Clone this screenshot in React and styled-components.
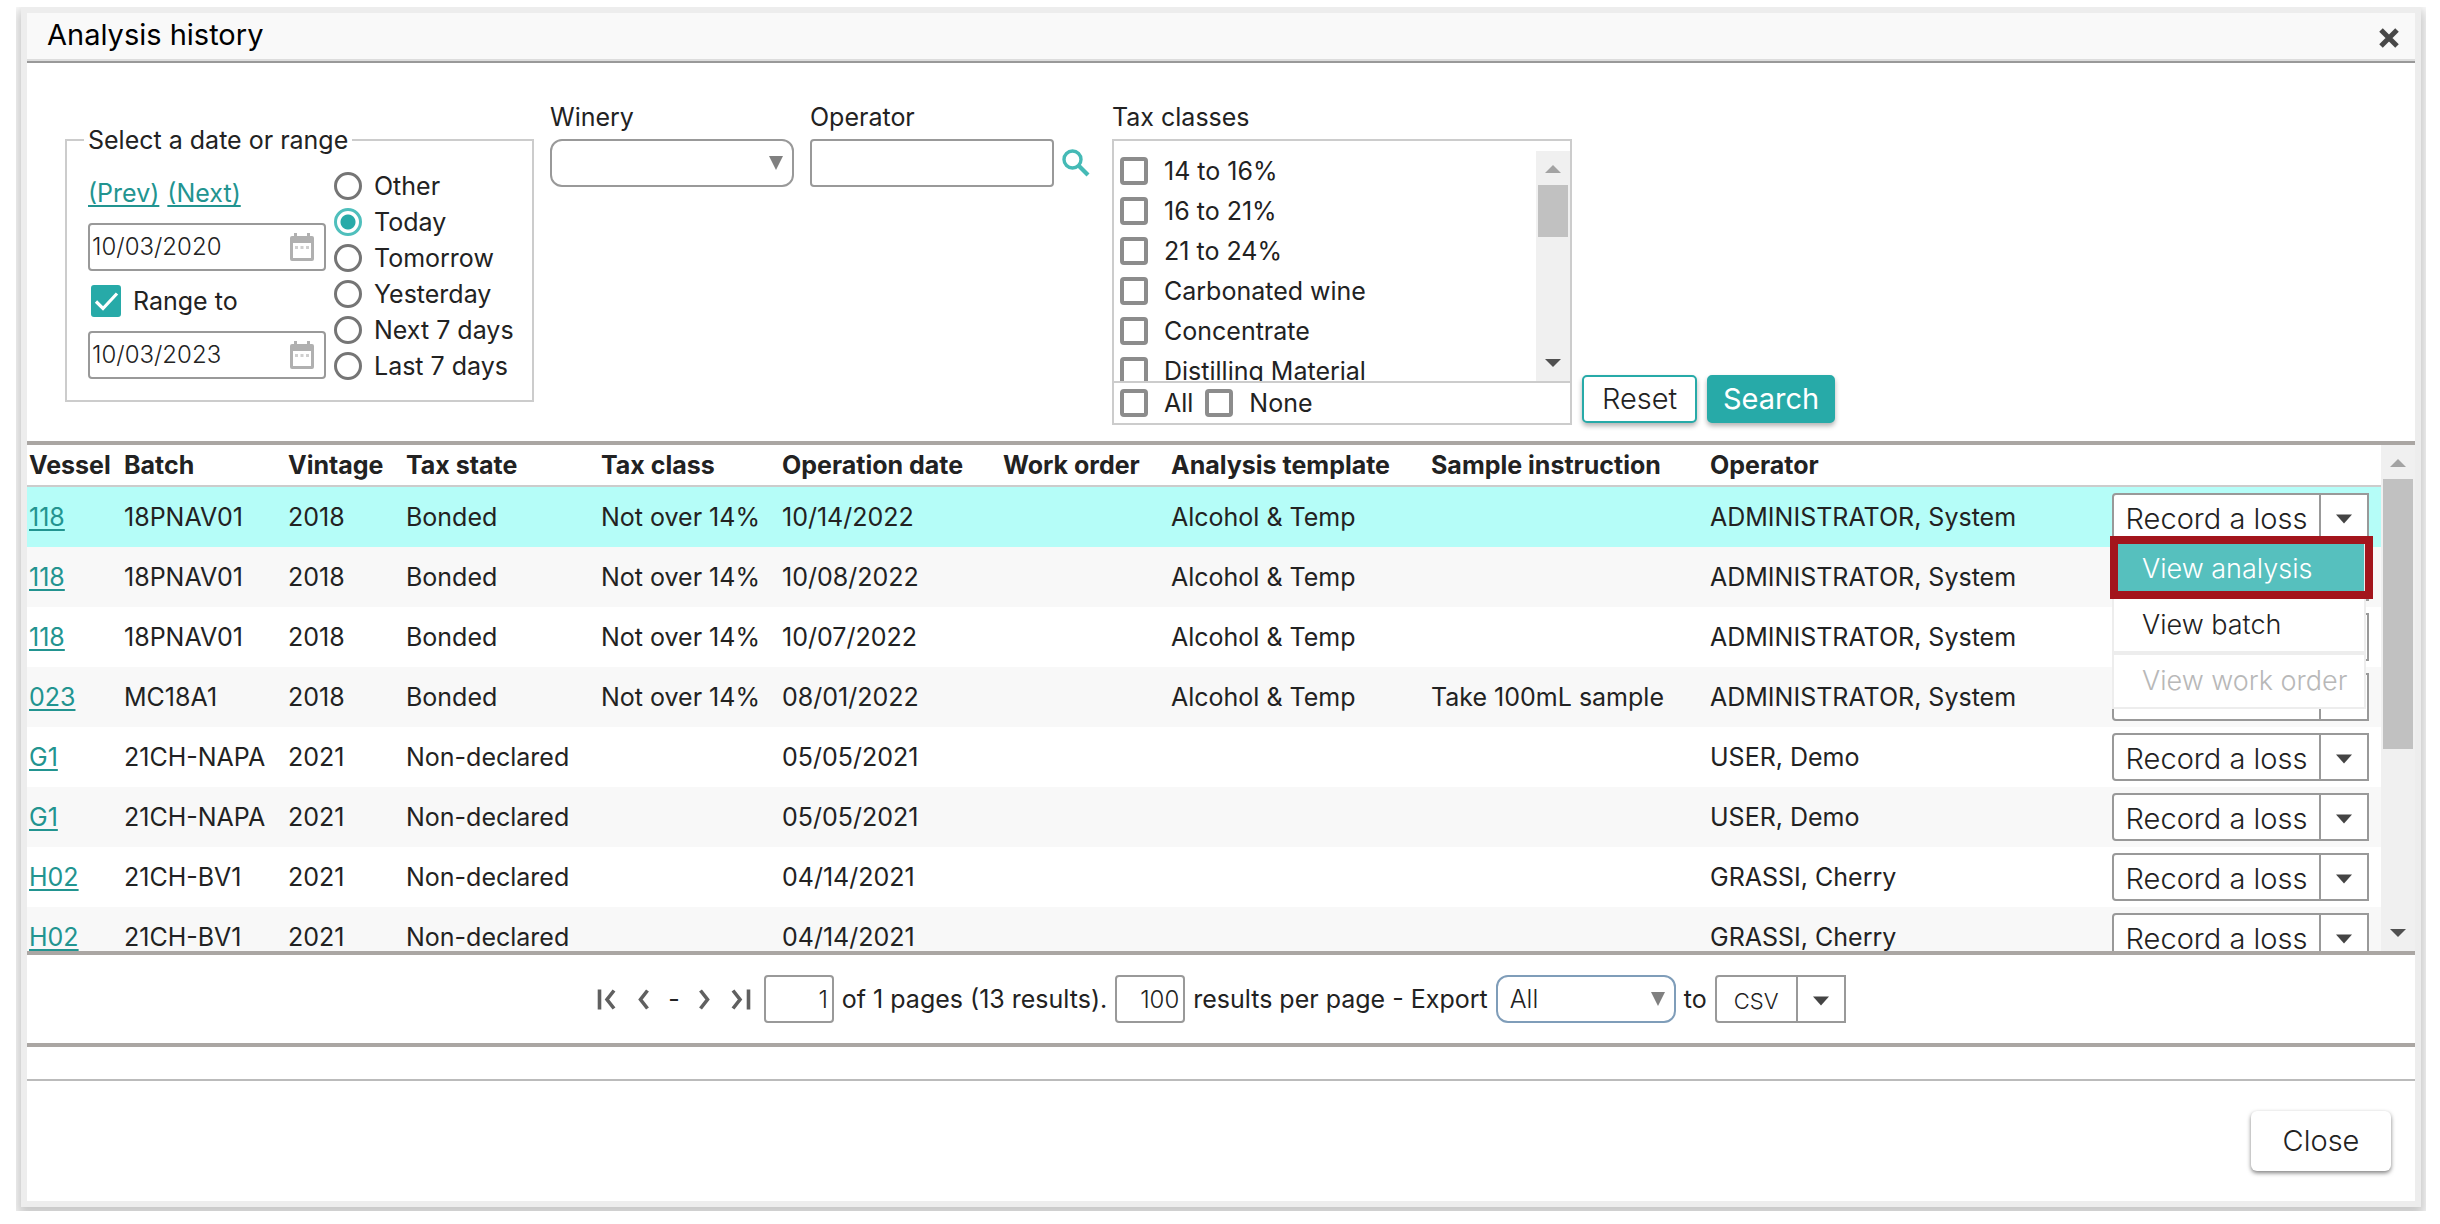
import React from "react";
import styled, { createGlobalStyle, css } from "styled-components";

const teal = "#27aaa8";
const ink = "#222222";
const line = "#999999";

const GlobalStyle = createGlobalStyle`
  *, *::before, *::after { box-sizing: border-box; }
  body {
    margin: 0;
    background: #ffffff;
    color: ${ink};
    font-family: Inter, "Open Sans", sans-serif;
    font-size: 25px;
    line-height: 28px;
  }
  button, input, select { font: inherit; color: inherit; margin: 0; }
  button { cursor: pointer; }
`;

const Backdrop = styled.div`
  overflow: hidden;
  margin: 7px 14px 13px 16px;
  padding: 0 5px 4px;
`;

const Dialog = styled.section`
  border: 6px solid #ededed;
  background: #ffffff;
  box-shadow: 0 6px 12px 4px #c8c8c8;
`;

const TitleBar = styled.header`
  display: flex;
  align-items: center;
  justify-content: space-between;
  height: 50px;
  padding: 2px 14px 0 20px;
  background: #f9f9f9;
  border-bottom: 2px solid ${line};
  box-shadow: inset 0 -2px 0 #dddddd;
`;

const Title = styled.h1`
  margin: 0;
  padding-bottom: 6px;
  color: #000000;
  font-size: 29px;
  font-weight: 400;
  line-height: 32px;
`;

const IconButton = styled.button`
  display: inline-flex;
  align-items: center;
  justify-content: ${(p) => (p.$width ? "flex-start" : "center")};
  width: ${(p) => p.$width || 24}px;
  height: 28px;
  padding: 0;
  border: 0;
  background: transparent;
`;

const Filters = styled.form`
  display: flex;
  align-items: flex-start;
  gap: 16px;
  padding: 40px 24px 16px 38px;
`;

const DateGroup = styled.fieldset`
  width: 469px;
  margin: 23px 0 0;
  padding: 0 0 16px 17px;
  border: 2px solid #cccccc;
`;

const Legend = styled.legend`
  padding: 0 4px;
`;

const DateColumns = styled.div`
  display: flex;
  gap: 8px;
  padding: 9px 0 0 4px;
`;

const DateColumn = styled.div`
  width: 238px;
`;

const DateRow = styled.div`
  display: flex;
  align-items: center;
  gap: 8px;
  height: 60px;
`;

const Link = styled.a`
  color: #229490;
  text-decoration: underline;
  text-decoration-thickness: 2px;
  text-underline-offset: 3px;
`;

const DateField = styled.div`
  display: flex;
  align-items: center;
  height: 48px;
  padding-right: 9px;
  border: 2px solid ${line};
  border-radius: 4px;
`;

const DateInput = styled.input`
  flex: 1;
  min-width: 0;
  padding: 0 0 0 2px;
  border: 0;
  background: transparent;
  font-size: 24px;
  font-weight: 300;
`;

const RadioColumn = styled.div`
  padding-top: 5px;
`;

const Choice = styled.label`
  display: flex;
  align-items: center;
  gap: ${(p) => p.$gap || 12}px;
  height: ${(p) => p.$height || 36}px;
  white-space: nowrap;
`;

const Radio = styled.input`
  appearance: none;
  flex: none;
  width: 28px;
  height: 28px;
  border: 3px solid #757575;
  border-radius: 50%;
  background: #ffffff;
  &:checked {
    border-color: #4fbfbc;
    background: radial-gradient(circle, ${teal} 7px, #ffffff 8px);
  }
`;

const Check = styled.input`
  appearance: none;
  flex: none;
  width: 28px;
  height: 28px;
  border: 4px solid #8c8c8c;
  border-radius: 4px;
  background: #ffffff;
`;

const TickWrap = styled.span`
  position: relative;
  display: inline-flex;
  margin-left: 3px;
`;

const TickBox = styled.input`
  appearance: none;
  width: 30px;
  height: 32px;
  border-radius: 3px;
  background: #ffffff;
  border: 3px solid #888888;
  &:checked { background: ${teal}; border-color: ${teal}; }
`;

const TickMark = styled.svg`
  position: absolute;
  inset: 0;
  pointer-events: none;
`;

const Field = styled.div`
  display: flex;
  flex-direction: column;
  gap: 8px;
`;

const InputRow = styled.div`
  display: flex;
  align-items: center;
  gap: 8px;
`;

const TextInput = styled.input`
  width: ${(p) => p.$width || 244}px;
  height: 48px;
  padding: 0 4px;
  border: 2px solid ${line};
  border-radius: 4px;
  background: #ffffff;
  font-size: 24px;
  font-weight: 300;
  text-align: ${(p) => p.$align || "left"};
`;

const SelectWrap = styled.span`
  position: relative;
  display: inline-flex;
  width: ${(p) => p.$width}px;
`;

const Select = styled.select`
  appearance: none;
  width: 100%;
  height: 48px;
  padding: 0 36px 0 12px;
  border: 2px solid ${(p) => p.$edge || line};
  border-radius: 12px;
  background: #ffffff;
  font-weight: 300;
`;

const SelectArrow = styled.svg`
  position: absolute;
  right: 11px;
  top: 17px;
  pointer-events: none;
`;

const TaxAndActions = styled.div`
  display: flex;
  align-items: flex-end;
  gap: 10px;
`;

const TaxBox = styled.div`
  width: 460px;
  padding-top: 10px;
  border: 2px solid #cccccc;
`;

const TaxScroll = styled.div`
  display: flex;
  height: 230px;
  overflow: hidden;
`;

const TaxList = styled.div`
  flex: 1;
  padding-left: 6px;
`;

const TaxFooter = styled.div`
  display: flex;
  gap: 12px;
  padding-left: 6px;
  border-top: 2px solid #cccccc;
`;

const Actions = styled.div`
  display: flex;
  gap: 10px;
  padding-bottom: 2px;
`;

const ActionButton = styled.button`
  width: ${(p) => p.$width}px;
  height: 48px;
  padding: 0;
  border: 2px solid ${teal};
  border-radius: 5px;
  box-shadow: 0 3px 5px rgba(0, 0, 0, 0.3);
  background: ${(p) => (p.$solid ? teal : "#ffffff")};
  color: ${(p) => (p.$solid ? "#ffffff" : ink)};
  font-size: 29px;
  font-weight: ${(p) => (p.$solid ? 400 : 300)};
`;

const ScrollTrack = styled.div`
  display: flex;
  flex-direction: column;
  align-items: center;
  flex: none;
  width: 34px;
  background: #f0f0f0;
`;

const ScrollArrow = styled.svg`
  flex: none;
  width: 16px;
  height: 34px;
`;

const ScrollThumb = styled.div`
  width: 30px;
  height: ${(p) => p.$size}px;
  margin-bottom: auto;
  background: #c1c1c1;
`;

const Results = styled.div`
  display: flex;
  height: 514px;
  overflow: hidden;
  border-top: 4px solid #aaa6a3;
  border-bottom: 4px solid #aaa6a3;
`;

const ResultsBody = styled.div`
  flex: 1;
  min-width: 0;
`;

const Table = styled.table`
  width: 100%;
  table-layout: fixed;
  border-collapse: separate;
  border-spacing: 0;
`;

const Col = styled.col`
  width: ${(p) => (p.$width ? p.$width + "px" : "auto")};
`;

const Th = styled.th`
  height: 42px;
  padding: 0 2px;
  border-bottom: 2px solid #cccccc;
  font-weight: 700;
  text-align: left;
  white-space: nowrap;
`;

const Tr = styled.tr`
  background: ${(p) => (p.$selected ? "#b5fdf8" : "#ffffff")};
  ${(p) =>
    !p.$selected &&
    css`
      &:nth-child(even) { background: #f8f8f8; }
    `}
`;

const Td = styled.td`
  height: 60px;
  padding: 0 2px;
  white-space: nowrap;
`;

const ActionCell = styled.div`
  position: relative;
  width: 257px;
`;

const Split = styled.div`
  display: flex;
  width: ${(p) => p.$width}px;
  height: 48px;
  border: 2px solid ${line};
  border-radius: 4px 0 0 4px;
  background: #ffffff;
`;

const SplitMain = styled.button`
  flex: 1;
  padding: 4px 0 0;
  border: 0;
  background: transparent;
  font-size: ${(p) => (p.$small ? 22 : 29)}px;
  font-weight: 300;
  white-space: nowrap;
`;

const SplitArrow = styled.button`
  display: flex;
  align-items: center;
  justify-content: center;
  width: 48px;
  padding: 4px 0 0;
  border: 0;
  border-left: 2px solid ${line};
  background: transparent;
`;

const Menu = styled.div`
  position: absolute;
  z-index: 2;
  top: 48px;
  left: 0;
  width: 254px;
`;

const MenuItem = styled.button`
  display: block;
  width: 100%;
  height: 56px;
  padding: 0 0 0 28px;
  border: 2px solid #ededed;
  background: ${(p) => (p.$active ? "#56c0be" : "#ffffff")};
  color: ${(p) => (p.$active ? "#ffffff" : ink)};
  font-size: 27px;
  font-weight: 300;
  text-align: left;
  white-space: nowrap;
  &:disabled { color: #b8b8b8; }
`;

const Highlight = styled.div`
  position: absolute;
  z-index: 3;
  top: 43px;
  left: -2px;
  width: 263px;
  height: 63px;
  border: 8px solid #a3151c;
  pointer-events: none;
`;

const Pager = styled.nav`
  display: flex;
  align-items: center;
  justify-content: center;
  gap: 8px;
  height: 92px;
  border-bottom: 4px solid #aaa6a3;
  white-space: nowrap;
`;

const PagerIcons = styled.div`
  display: flex;
  align-items: center;
  gap: 12px;
  padding-right: 4px;
`;

const Footer = styled.footer`
  display: flex;
  justify-content: flex-end;
  margin-top: 32px;
  padding: 30px 24px;
  border-top: 2px solid #bbbbbb;
`;

const CloseButton = styled.button`
  width: 140px;
  height: 60px;
  border: 0;
  border-radius: 6px;
  background: #ffffff;
  box-shadow: 0 2px 4px rgba(0, 0, 0, 0.5);
  font-size: 29px;
  font-weight: 300;
`;

const CrossIcon = () => (
  <svg width="22" height="22" viewBox="0 0 22 22" fill="none" stroke="#484848" strokeWidth="5" aria-hidden="true">
    <path d="M3 3 19 19M19 3 3 19" />
  </svg>
);

const CalendarIcon = () => (
  <svg width="26" height="28" viewBox="0 0 26 28" aria-hidden="true">
    <path d="M5 0h3v3h10V0h3v3h2a2 2 0 0 1 2 2v21a2 2 0 0 1-2 2H3a2 2 0 0 1-2-2V5a2 2 0 0 1 2-2h2z" fill="#b0b0b0" />
    <path d="M4 10h18v15H4z" fill="#fff" />
    <path d="M6 13h3v3H6zm5.500 0h3v3h-3zm5.500 0h3v3h-3z" fill="#cfcfcf" />
  </svg>
);

const SearchIcon = () => (
  <svg width="28" height="28" viewBox="0 0 28 28" fill="none" stroke="#45bab6" strokeWidth="3.400" aria-hidden="true">
    <circle cx="10.500" cy="10.500" r="8.500" />
    <path d="M16.500 16.500 26 26" strokeWidth="4.200" />
  </svg>
);

const Down = ({ color = "#444444" }) => (
  <svg width="18" height="10" viewBox="0 0 18 10" aria-hidden="true">
    <path d="M1 0.500h16L9 9.500z" fill={color} />
  </svg>
);

const navPaths = {
  first: "M3.500 2.500v20M18 3.500 11 12.500 18 21.500",
  prev: "M15.500 3.500 8.500 12.500 15.500 21.500",
  next: "M8.500 3.500 15.500 12.500 8.500 21.500",
  last: "M5 3.500 12 12.500 5 21.500M20.500 2.500v20",
};

const NavIcon = ({ kind }) => (
  <svg width="24" height="25" viewBox="0 0 24 25" fill="none" stroke="#606060" strokeWidth="3.600" aria-hidden="true">
    <path d={navPaths[kind]} />
  </svg>
);

const ScrollBar = ({ size }) => (
  <ScrollTrack aria-hidden="true">
    <ScrollArrow viewBox="0 0 16 34">
      <path d="M8 14 16 22H0z" fill="#a3a3a3" />
    </ScrollArrow>
    <ScrollThumb $size={size} />
    <ScrollArrow viewBox="0 0 16 34">
      <path d="M0 12h16L8 20z" fill="#505050" />
    </ScrollArrow>
  </ScrollTrack>
);

const Dropdown = ({ width, edge, id, label, options }) => (
  <SelectWrap $width={width}>
    <Select id={id} aria-label={label} $edge={edge}>
      {options.map((o) => (
        <option key={o}>{o}</option>
      ))}
    </Select>
    <SelectArrow width="14" height="14" viewBox="0 0 14 14" aria-hidden="true">
      <path d="M0 0h14L7 14z" fill="#808080" />
    </SelectArrow>
  </SelectWrap>
);

const SplitButton = ({ children, width, small }) => (
  <Split $width={width}>
    <SplitMain type="button" $small={small}>{children}</SplitMain>
    <SplitArrow type="button" aria-label="More options">
      <Down />
    </SplitArrow>
  </Split>
);

const ranges = ["Other", "Today", "Tomorrow", "Yesterday", "Next 7 days", "Last 7 days"];
const taxClasses = ["14 to 16%", "16 to 21%", "21 to 24%", "Carbonated wine", "Concentrate", "Distilling Material"];

const columns = [
  ["Vessel", 95],
  ["Batch", 164],
  ["Vintage", 118],
  ["Tax state", 195],
  ["Tax class", 181],
  ["Operation date", 221],
  ["Work order", 168],
  ["Analysis template", 260],
  ["Sample instruction", 279],
  ["Operator", 0],
];

const admin = "ADMINISTRATOR, System";
const rows = [
  ["118", "18PNAV01", "2018", "Bonded", "Not over 14%", "10/14/2022", "", "Alcohol & Temp", "", admin],
  ["118", "18PNAV01", "2018", "Bonded", "Not over 14%", "10/08/2022", "", "Alcohol & Temp", "", admin],
  ["118", "18PNAV01", "2018", "Bonded", "Not over 14%", "10/07/2022", "", "Alcohol & Temp", "", admin],
  ["023", "MC18A1", "2018", "Bonded", "Not over 14%", "08/01/2022", "", "Alcohol & Temp", "Take 100mL sample", admin],
  ["G1", "21CH-NAPA", "2021", "Non-declared", "", "05/05/2021", "", "", "", "USER, Demo"],
  ["G1", "21CH-NAPA", "2021", "Non-declared", "", "05/05/2021", "", "", "", "USER, Demo"],
  ["H02", "21CH-BV1", "2021", "Non-declared", "", "04/14/2021", "", "", "", "GRASSI, Cherry"],
  ["H02", "21CH-BV1", "2021", "Non-declared", "", "04/14/2021", "", "", "", "GRASSI, Cherry"],
];

const DateBox = ({ label, value }) => (
  <DateField>
    <DateInput type="text" aria-label={label} defaultValue={value} />
    <CalendarIcon />
  </DateField>
);

export default function App() {
  return (
    <>
      <GlobalStyle />
      <Backdrop>
        <Dialog role="dialog" aria-labelledby="dialog-title">
          <TitleBar>
            <Title id="dialog-title">Analysis history</Title>
            <IconButton type="button" aria-label="Close dialog">
              <CrossIcon />
            </IconButton>
          </TitleBar>

          <Filters onSubmit={(e) => e.preventDefault()}>
            <DateGroup>
              <Legend>Select a date or range</Legend>
              <DateColumns>
                <DateColumn>
                  <DateRow>
                    <Link href="#prev">(Prev)</Link>
                    <Link href="#next">(Next)</Link>
                  </DateRow>
                  <DateBox label="From date" value="10/03/2020" />
                  <Choice $height={60}>
                    <TickWrap>
                      <TickBox type="checkbox" defaultChecked />
                      <TickMark width="30" height="32" viewBox="0 0 30 32" fill="none" stroke="#fff" strokeWidth="3.200" aria-hidden="true">
                        <path d="M5 16.500 12 23.500 26 8.500" />
                      </TickMark>
                    </TickWrap>
                    Range to
                  </Choice>
                  <DateBox label="To date" value="10/03/2023" />
                </DateColumn>
                <RadioColumn>
                  {ranges.map((r) => (
                    <Choice key={r}>
                      <Radio type="radio" name="range" defaultChecked={r === "Today"} />
                      {r}
                    </Choice>
                  ))}
                </RadioColumn>
              </DateColumns>
            </DateGroup>

            <Field>
              <label htmlFor="winery">Winery</label>
              <Dropdown id="winery" width={244} options={[""]} />
            </Field>

            <Field>
              <label htmlFor="operator">Operator</label>
              <InputRow>
                <TextInput id="operator" type="text" />
                <IconButton type="button" aria-label="Find operator" $width={34}>
                  <SearchIcon />
                </IconButton>
              </InputRow>
            </Field>

            <TaxAndActions>
              <Field>
                <span id="tax-label">Tax classes</span>
                <TaxBox role="group" aria-labelledby="tax-label">
                  <TaxScroll>
                    <TaxList>
                      {taxClasses.map((t) => (
                        <Choice key={t} $height={40} $gap={16}>
                          <Check type="checkbox" />
                          {t}
                        </Choice>
                      ))}
                    </TaxList>
                    <ScrollBar size={52} />
                  </TaxScroll>
                  <TaxFooter>
                    <Choice $height={40} $gap={16}>
                      <Check type="checkbox" />
                      All
                    </Choice>
                    <Choice $height={40} $gap={16}>
                      <Check type="checkbox" />
                      None
                    </Choice>
                  </TaxFooter>
                </TaxBox>
              </Field>
              <Actions>
                <ActionButton type="reset" $width={115}>Reset</ActionButton>
                <ActionButton type="submit" $width={128} $solid>Search</ActionButton>
              </Actions>
            </TaxAndActions>
          </Filters>

          <Results>
            <ResultsBody>
              <Table>
                <colgroup>
                  {columns.map(([name, width]) => (
                    <Col key={name} $width={width} />
                  ))}
                  <Col $width={271} />
                </colgroup>
                <thead>
                  <tr>
                    {columns.map(([name]) => (
                      <Th key={name} scope="col">{name}</Th>
                    ))}
                    <Th aria-label="Actions" />
                  </tr>
                </thead>
                <tbody>
                  {rows.map((row, i) => (
                    <Tr key={i} $selected={i === 0}>
                      {row.map((value, c) => (
                        <Td key={c}>{c === 0 ? <Link href="#vessel">{value}</Link> : value}</Td>
                      ))}
                      <Td>
                        <ActionCell>
                          <SplitButton width={257}>Record a loss</SplitButton>
                          {i === 0 && (
                            <>
                              <Menu role="menu">
                                <MenuItem type="button" role="menuitem" $active>View analysis</MenuItem>
                                <MenuItem type="button" role="menuitem">View batch</MenuItem>
                                <MenuItem type="button" role="menuitem" disabled>View work order</MenuItem>
                              </Menu>
                              <Highlight />
                            </>
                          )}
                        </ActionCell>
                      </Td>
                    </Tr>
                  ))}
                </tbody>
              </Table>
            </ResultsBody>
            <ScrollBar size={270} />
          </Results>

          <Pager aria-label="Result pages">
            <PagerIcons>
              <IconButton type="button" aria-label="First page"><NavIcon kind="first" /></IconButton>
              <IconButton type="button" aria-label="Previous page"><NavIcon kind="prev" /></IconButton>
              <span>-</span>
              <IconButton type="button" aria-label="Next page"><NavIcon kind="next" /></IconButton>
              <IconButton type="button" aria-label="Last page"><NavIcon kind="last" /></IconButton>
            </PagerIcons>
            <TextInput type="text" aria-label="Page" defaultValue="1" $width={70} $align="right" />
            <span>of 1 pages (13 results).</span>
            <TextInput type="text" aria-label="Results per page" defaultValue="100" $width={70} $align="right" />
            <span>results per page - Export</span>
            <Dropdown width={180} edge="#7f9db9" label="Export scope" options={["All"]} />
            <span>to</span>
            <SplitButton width={131} small>CSV</SplitButton>
          </Pager>

          <Footer>
            <CloseButton type="button">Close</CloseButton>
          </Footer>
        </Dialog>
      </Backdrop>
    </>
  );
}
